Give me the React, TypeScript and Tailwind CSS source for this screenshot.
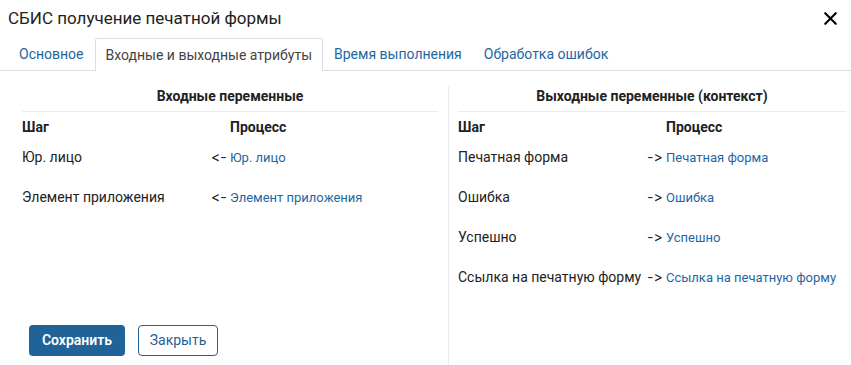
import { X } from 'lucide-react'

const inputs = [
  { step: 'Юр. лицо', process: 'Юр. лицо' },
  { step: 'Элемент приложения', process: 'Элемент приложения' },
]

const outputs = [
  { step: 'Печатная форма', process: 'Печатная форма' },
  { step: 'Ошибка', process: 'Ошибка' },
  { step: 'Успешно', process: 'Успешно' },
  { step: 'Ссылка на печатную форму', process: 'Ссылка на печатную форму' },
]

const tabs = ['Основное', 'Входные и выходные атрибуты', 'Время выполнения', 'Обработка ошибок']

function VarTable({
  title,
  rows,
  arrow,
}: {
  title: string
  rows: { step: string; process: string }[]
  arrow: string
}) {
  return (
    <div>
      <div className="text-center text-[14px] font-bold leading-[20px] text-[#222] pb-[5px] border-b border-[#ececec]">
        {title}
      </div>
      <div className="grid grid-cols-[189px_19px_1fr] text-[14px] leading-[20px] text-[#222]">
        <div className="font-bold pt-[5px]">Шаг</div>
        <div />
        <div className="font-bold pt-[5px]">Процесс</div>
        {rows.map((r, i) => {
          const pad = i === 0 ? 'pt-[10px]' : 'pt-[20px]'
          return (
            <div key={i} className="contents">
              <div className={`${pad} whitespace-nowrap`}>{r.step}</div>
              <div
                className={`${pad} font-['Inter'] text-[14px] whitespace-nowrap [font-variant-ligatures:none] [font-feature-settings:'calt'_0,'liga'_0]`}
              >
                {arrow}
              </div>
              <div className={`${pad} text-[13px] text-[#1d67a3] translate-y-[1px] whitespace-nowrap`}>
                {r.process}
              </div>
            </div>
          )
        })}
      </div>
    </div>
  )
}

export default function App() {
  return (
    <div
      className="w-[851px] h-[365px] bg-white flex flex-col overflow-hidden"
      style={{ fontFamily: 'Roboto, "Noto Sans", sans-serif' }}
    >
      <div className="flex items-center justify-between pl-[8px] pr-[10px] h-[35px] pt-[1px]">
        <h1 className="text-[17px] text-[#222] leading-[22px]">СБИС получение печатной формы</h1>
        <X className="w-[21px] h-[21px] text-black" strokeWidth={2.5} />
      </div>
      <div className="flex items-end h-[37px] pl-[8px] border-b border-[#dedede] mt-[-1px]">
        {tabs.map((t, i) =>
          i === 1 ? (
            <div
              key={t}
              className="h-[33px] px-[10px] flex items-center text-[14px] text-[#444] bg-white border border-b-0 border-[#dedede] rounded-t-[2px] -mb-px"
            >
              {t}
            </div>
          ) : (
            <div key={t} className="h-[32px] px-[11px] flex items-center text-[14px] text-[#1d67a3]">
              {t}
            </div>
          )
        )}
      </div>
      <div className="flex-1 flex pt-[15px]">
        <div className="w-[449px] flex flex-col border-r border-[#ececec]">
          <div className="pl-[22px] pr-[10px]">
            <VarTable title="Входные переменные" rows={inputs} arrow="<-" />
          </div>
          <div className="mt-auto flex gap-[13px] pl-[29px] pb-[9px]">
            <button className="h-[31px] w-[96px] rounded-[4px] bg-[#1f6399] text-white text-[14px] font-semibold">
              Сохранить
            </button>
            <button className="h-[31px] w-[80px] rounded-[4px] border border-[#1f6399] text-[#1f5f93] text-[14px] bg-white">
              Закрыть
            </button>
          </div>
        </div>
        <div className="flex-1 pl-[9px] pr-[5px]">
          <VarTable title="Выходные переменные (контекст)" rows={outputs} arrow="->" />
        </div>
      </div>
    </div>
  )
}
